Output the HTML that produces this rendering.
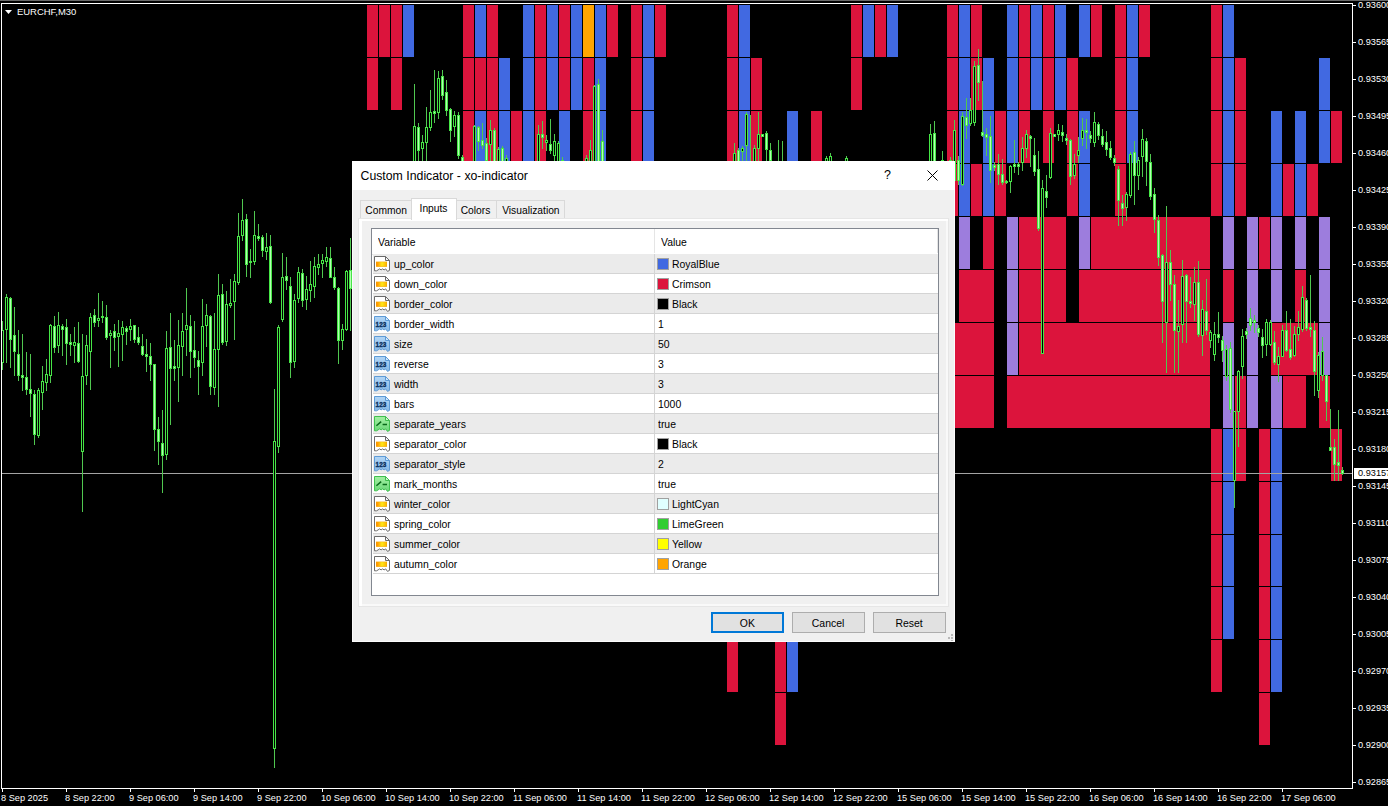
<!DOCTYPE html><html><head><meta charset="utf-8"><style>
html,body{margin:0;padding:0}
body{width:1388px;height:806px;overflow:hidden;position:relative;background:#000;font-family:"Liberation Sans",sans-serif}
.t{position:absolute;color:#fff;font-size:9.2px;line-height:10px;white-space:nowrap}
.pl{position:absolute;left:1358px;color:#fff;font-size:9.2px;line-height:10px;white-space:nowrap}
#dlg{position:absolute;left:352px;top:161px;width:603px;height:481px;background:#f0f0f0;box-shadow:inset 1px 0 0 #fcfcfc,inset -1px 0 0 #fcfcfc,inset 0 -1px 0 #fcfcfc}
#dlg .title{position:absolute;left:0;top:0;width:603px;height:29px;background:#fff}
#dlg .ttxt{position:absolute;left:8.5px;top:8px;font-size:12.3px;line-height:14px;color:#000;white-space:nowrap}
.sx{display:inline-block;transform:scaleX(.915);transform-origin:0 50%;white-space:nowrap}
.sc{display:inline-block;transform:scaleX(.9);transform-origin:50% 50%;white-space:nowrap}
.tab{position:absolute;font-size:11.4px;line-height:12px;color:#000;white-space:nowrap;box-sizing:border-box;border:1px solid #d9d9d9;background:#f0f0f0;text-align:center}
#pane{position:absolute;left:6px;top:57px;width:591px;height:389px;background:#f0f0f0;border:1px solid #e6e6e6;box-sizing:border-box;box-shadow:inset 3px 2px 0 #fff,inset -2px -2px 0 #f9f9f9}
#list{position:absolute;left:19px;top:67px;width:568px;height:368px;background:#fff;border:1px solid #828790;box-sizing:border-box}
.row{position:absolute;left:1px;width:565px;height:19px;border-bottom:1px solid #d4d4d4;font-size:11.4px;line-height:21px;color:#000;white-space:nowrap}
.row.g{background:#ebebeb}
.row .n{position:absolute;left:20.75px;top:0}
.row .v{position:absolute;left:285px;top:0}
.row .vs{position:absolute;left:299px;top:0}
.row .sw{position:absolute;left:284px;top:4px;width:10px;height:10px;border:1px solid #a0a0a0}
.row .sep{position:absolute;left:281px;top:0;width:1px;height:19px;background:#d4d4d4}
.row svg{position:absolute;left:1px;top:2px}
.btn{position:absolute;top:451px;width:73px;height:21px;box-sizing:border-box;border:1px solid #adadad;background:#e1e1e1;font-size:11.6px;line-height:19px;text-align:center;color:#000}
</style></head><body>
<svg width="1388" height="806" shape-rendering="crispEdges" style="position:absolute;left:0;top:0">
<rect x="367" y="5" width="11" height="52" fill="#DC143C"/>
<rect x="379" y="5" width="11" height="52" fill="#DC143C"/>
<rect x="391" y="5" width="11" height="52" fill="#DC143C"/>
<rect x="403" y="5" width="11" height="52" fill="#4169E1"/>
<rect x="463" y="5" width="11" height="52" fill="#DC143C"/>
<rect x="475" y="5" width="11" height="52" fill="#4169E1"/>
<rect x="487" y="5" width="11" height="52" fill="#DC143C"/>
<rect x="523" y="5" width="11" height="52" fill="#4169E1"/>
<rect x="535" y="5" width="11" height="52" fill="#DC143C"/>
<rect x="547" y="5" width="11" height="52" fill="#4169E1"/>
<rect x="559" y="5" width="11" height="52" fill="#DC143C"/>
<rect x="571" y="5" width="11" height="52" fill="#4169E1"/>
<rect x="583" y="5" width="11" height="52" fill="#FFA500"/>
<rect x="595" y="5" width="11" height="52" fill="#4169E1"/>
<rect x="607" y="5" width="11" height="52" fill="#DC143C"/>
<rect x="631" y="5" width="11" height="52" fill="#DC143C"/>
<rect x="643" y="5" width="11" height="52" fill="#4169E1"/>
<rect x="655" y="5" width="11" height="52" fill="#DC143C"/>
<rect x="727" y="5" width="11" height="52" fill="#DC143C"/>
<rect x="739" y="5" width="11" height="52" fill="#4169E1"/>
<rect x="851" y="5" width="11" height="52" fill="#DC143C"/>
<rect x="863" y="5" width="11" height="52" fill="#4169E1"/>
<rect x="875" y="5" width="11" height="52" fill="#DC143C"/>
<rect x="887" y="5" width="11" height="52" fill="#4169E1"/>
<rect x="947" y="5" width="11" height="52" fill="#DC143C"/>
<rect x="959" y="5" width="11" height="52" fill="#4169E1"/>
<rect x="971" y="5" width="11" height="52" fill="#DC143C"/>
<rect x="1007" y="5" width="11" height="52" fill="#4169E1"/>
<rect x="1019" y="5" width="11" height="52" fill="#DC143C"/>
<rect x="1031" y="5" width="11" height="52" fill="#4169E1"/>
<rect x="1043" y="5" width="11" height="52" fill="#DC143C"/>
<rect x="1055" y="5" width="11" height="52" fill="#4169E1"/>
<rect x="1079" y="5" width="11" height="52" fill="#4169E1"/>
<rect x="1091" y="5" width="11" height="52" fill="#DC143C"/>
<rect x="1115" y="5" width="11" height="52" fill="#DC143C"/>
<rect x="1127" y="5" width="11" height="52" fill="#4169E1"/>
<rect x="1139" y="5" width="11" height="52" fill="#DC143C"/>
<rect x="1211" y="5" width="11" height="52" fill="#DC143C"/>
<rect x="1223" y="5" width="11" height="52" fill="#4169E1"/>
<rect x="367" y="58" width="11" height="52" fill="#DC143C"/>
<rect x="391" y="58" width="11" height="52" fill="#DC143C"/>
<rect x="463" y="58" width="11" height="52" fill="#DC143C"/>
<rect x="475" y="58" width="11" height="52" fill="#DC143C"/>
<rect x="487" y="58" width="11" height="52" fill="#DC143C"/>
<rect x="499" y="58" width="11" height="52" fill="#4169E1"/>
<rect x="523" y="58" width="11" height="52" fill="#4169E1"/>
<rect x="535" y="58" width="11" height="52" fill="#DC143C"/>
<rect x="547" y="58" width="11" height="52" fill="#4169E1"/>
<rect x="559" y="58" width="11" height="52" fill="#DC143C"/>
<rect x="571" y="58" width="11" height="52" fill="#4169E1"/>
<rect x="583" y="58" width="11" height="52" fill="#DC143C"/>
<rect x="595" y="58" width="11" height="52" fill="#4169E1"/>
<rect x="631" y="58" width="11" height="52" fill="#DC143C"/>
<rect x="643" y="58" width="11" height="52" fill="#4169E1"/>
<rect x="727" y="58" width="11" height="52" fill="#DC143C"/>
<rect x="739" y="58" width="11" height="52" fill="#4169E1"/>
<rect x="751" y="58" width="11" height="52" fill="#DC143C"/>
<rect x="851" y="58" width="11" height="52" fill="#DC143C"/>
<rect x="947" y="58" width="11" height="52" fill="#DC143C"/>
<rect x="959" y="58" width="11" height="52" fill="#4169E1"/>
<rect x="971" y="58" width="11" height="52" fill="#DC143C"/>
<rect x="983" y="58" width="11" height="52" fill="#4169E1"/>
<rect x="1007" y="58" width="11" height="52" fill="#4169E1"/>
<rect x="1019" y="58" width="11" height="52" fill="#DC143C"/>
<rect x="1031" y="58" width="11" height="52" fill="#4169E1"/>
<rect x="1043" y="58" width="11" height="52" fill="#DC143C"/>
<rect x="1055" y="58" width="11" height="52" fill="#4169E1"/>
<rect x="1067" y="58" width="11" height="52" fill="#DC143C"/>
<rect x="1115" y="58" width="11" height="52" fill="#DC143C"/>
<rect x="1127" y="58" width="11" height="52" fill="#4169E1"/>
<rect x="1211" y="58" width="11" height="52" fill="#DC143C"/>
<rect x="1223" y="58" width="11" height="52" fill="#4169E1"/>
<rect x="1235" y="58" width="11" height="52" fill="#DC143C"/>
<rect x="1319" y="58" width="11" height="52" fill="#4169E1"/>
<rect x="463" y="111" width="11" height="52" fill="#DC143C"/>
<rect x="475" y="111" width="11" height="52" fill="#4169E1"/>
<rect x="487" y="111" width="11" height="52" fill="#DC143C"/>
<rect x="499" y="111" width="11" height="52" fill="#4169E1"/>
<rect x="511" y="111" width="11" height="52" fill="#DC143C"/>
<rect x="523" y="111" width="11" height="52" fill="#4169E1"/>
<rect x="535" y="111" width="11" height="52" fill="#DC143C"/>
<rect x="559" y="111" width="11" height="52" fill="#4169E1"/>
<rect x="583" y="111" width="11" height="52" fill="#DC143C"/>
<rect x="595" y="111" width="11" height="52" fill="#4169E1"/>
<rect x="631" y="111" width="11" height="52" fill="#DC143C"/>
<rect x="643" y="111" width="11" height="52" fill="#4169E1"/>
<rect x="727" y="111" width="11" height="52" fill="#DC143C"/>
<rect x="739" y="111" width="11" height="52" fill="#4169E1"/>
<rect x="751" y="111" width="11" height="52" fill="#DC143C"/>
<rect x="787" y="111" width="11" height="52" fill="#4169E1"/>
<rect x="811" y="111" width="11" height="52" fill="#DC143C"/>
<rect x="947" y="111" width="11" height="52" fill="#DC143C"/>
<rect x="959" y="111" width="11" height="52" fill="#4169E1"/>
<rect x="983" y="111" width="11" height="52" fill="#4169E1"/>
<rect x="995" y="111" width="11" height="52" fill="#DC143C"/>
<rect x="1007" y="111" width="11" height="52" fill="#4169E1"/>
<rect x="1019" y="111" width="11" height="52" fill="#DC143C"/>
<rect x="1043" y="111" width="11" height="52" fill="#DC143C"/>
<rect x="1067" y="111" width="11" height="52" fill="#DC143C"/>
<rect x="1079" y="111" width="11" height="52" fill="#4169E1"/>
<rect x="1115" y="111" width="11" height="52" fill="#DC143C"/>
<rect x="1127" y="111" width="11" height="52" fill="#4169E1"/>
<rect x="1211" y="111" width="11" height="52" fill="#DC143C"/>
<rect x="1223" y="111" width="11" height="52" fill="#4169E1"/>
<rect x="1235" y="111" width="11" height="52" fill="#DC143C"/>
<rect x="1271" y="111" width="11" height="52" fill="#4169E1"/>
<rect x="1295" y="111" width="11" height="52" fill="#4169E1"/>
<rect x="1319" y="111" width="11" height="52" fill="#4169E1"/>
<rect x="1331" y="111" width="11" height="52" fill="#DC143C"/>
<rect x="947" y="164" width="11" height="52" fill="#DC143C"/>
<rect x="959" y="164" width="11" height="52" fill="#4169E1"/>
<rect x="971" y="164" width="11" height="52" fill="#DC143C"/>
<rect x="983" y="164" width="11" height="52" fill="#4169E1"/>
<rect x="995" y="164" width="11" height="52" fill="#DC143C"/>
<rect x="1067" y="164" width="11" height="52" fill="#DC143C"/>
<rect x="1079" y="164" width="11" height="52" fill="#4169E1"/>
<rect x="1115" y="164" width="11" height="52" fill="#DC143C"/>
<rect x="1211" y="164" width="11" height="52" fill="#DC143C"/>
<rect x="1223" y="164" width="11" height="52" fill="#4169E1"/>
<rect x="1235" y="164" width="11" height="52" fill="#DC143C"/>
<rect x="1271" y="164" width="11" height="52" fill="#4169E1"/>
<rect x="1283" y="164" width="11" height="52" fill="#DC143C"/>
<rect x="1295" y="164" width="11" height="52" fill="#4169E1"/>
<rect x="1307" y="164" width="11" height="52" fill="#DC143C"/>
<rect x="959" y="217" width="11" height="52" fill="#9D7DDD"/>
<rect x="983" y="217" width="11" height="52" fill="#DC143C"/>
<rect x="1007" y="217" width="11" height="52" fill="#9D7DDD"/>
<rect x="1019" y="217" width="47" height="52" fill="#DC143C"/>
<rect x="1079" y="217" width="11" height="52" fill="#9D7DDD"/>
<rect x="1091" y="217" width="119" height="52" fill="#DC143C"/>
<rect x="1223" y="217" width="11" height="52" fill="#9D7DDD"/>
<rect x="1247" y="217" width="11" height="52" fill="#9D7DDD"/>
<rect x="1259" y="217" width="11" height="52" fill="#DC143C"/>
<rect x="1271" y="217" width="11" height="52" fill="#9D7DDD"/>
<rect x="1295" y="217" width="11" height="52" fill="#9D7DDD"/>
<rect x="1319" y="217" width="11" height="52" fill="#9D7DDD"/>
<rect x="959" y="270" width="35" height="52" fill="#DC143C"/>
<rect x="1007" y="270" width="11" height="52" fill="#9D7DDD"/>
<rect x="1019" y="270" width="47" height="52" fill="#DC143C"/>
<rect x="1079" y="270" width="131" height="52" fill="#DC143C"/>
<rect x="1223" y="270" width="11" height="52" fill="#DC143C"/>
<rect x="1247" y="270" width="11" height="52" fill="#9D7DDD"/>
<rect x="1271" y="270" width="11" height="52" fill="#9D7DDD"/>
<rect x="1295" y="270" width="11" height="52" fill="#DC143C"/>
<rect x="1319" y="270" width="11" height="52" fill="#9D7DDD"/>
<rect x="947" y="323" width="47" height="52" fill="#DC143C"/>
<rect x="1007" y="323" width="11" height="52" fill="#9D7DDD"/>
<rect x="1019" y="323" width="191" height="52" fill="#DC143C"/>
<rect x="1223" y="323" width="11" height="52" fill="#9D7DDD"/>
<rect x="1247" y="323" width="11" height="52" fill="#9D7DDD"/>
<rect x="1271" y="323" width="47" height="52" fill="#DC143C"/>
<rect x="1319" y="323" width="11" height="52" fill="#9D7DDD"/>
<rect x="947" y="376" width="47" height="52" fill="#DC143C"/>
<rect x="1007" y="376" width="203" height="52" fill="#DC143C"/>
<rect x="1223" y="376" width="11" height="52" fill="#9D7DDD"/>
<rect x="1235" y="376" width="11" height="52" fill="#DC143C"/>
<rect x="1247" y="376" width="11" height="52" fill="#9D7DDD"/>
<rect x="1271" y="376" width="11" height="52" fill="#9D7DDD"/>
<rect x="1283" y="376" width="23" height="52" fill="#DC143C"/>
<rect x="1319" y="376" width="11" height="52" fill="#DC143C"/>
<rect x="1211" y="429" width="11" height="52" fill="#DC143C"/>
<rect x="1223" y="429" width="11" height="52" fill="#4169E1"/>
<rect x="1235" y="429" width="11" height="52" fill="#DC143C"/>
<rect x="1259" y="429" width="11" height="52" fill="#DC143C"/>
<rect x="1271" y="429" width="11" height="52" fill="#4169E1"/>
<rect x="1331" y="429" width="11" height="52" fill="#DC143C"/>
<rect x="1211" y="482" width="11" height="52" fill="#DC143C"/>
<rect x="1223" y="482" width="11" height="52" fill="#4169E1"/>
<rect x="1259" y="482" width="11" height="52" fill="#DC143C"/>
<rect x="1271" y="482" width="11" height="52" fill="#4169E1"/>
<rect x="1211" y="535" width="11" height="51" fill="#DC143C"/>
<rect x="1223" y="535" width="11" height="51" fill="#4169E1"/>
<rect x="1259" y="535" width="11" height="51" fill="#DC143C"/>
<rect x="1271" y="535" width="11" height="51" fill="#4169E1"/>
<rect x="1211" y="587" width="11" height="52" fill="#DC143C"/>
<rect x="1223" y="587" width="11" height="52" fill="#4169E1"/>
<rect x="1259" y="587" width="11" height="52" fill="#DC143C"/>
<rect x="1271" y="587" width="11" height="52" fill="#4169E1"/>
<rect x="727" y="640" width="11" height="52" fill="#DC143C"/>
<rect x="775" y="640" width="11" height="52" fill="#DC143C"/>
<rect x="787" y="640" width="11" height="52" fill="#4169E1"/>
<rect x="1211" y="640" width="11" height="52" fill="#DC143C"/>
<rect x="1259" y="640" width="11" height="52" fill="#DC143C"/>
<rect x="1271" y="640" width="11" height="52" fill="#4169E1"/>
<rect x="775" y="693" width="11" height="52" fill="#DC143C"/>
<rect x="1259" y="693" width="11" height="52" fill="#DC143C"/>
<rect x="2" y="473" width="1350" height="1" fill="#a4a4a4"/>
<rect x="2" y="321" width="1" height="49" fill="#50c850"/>
<rect x="1" y="330" width="3" height="33" fill="#46e646"/>
<rect x="2" y="331" width="1" height="31" fill="#000"/>
<rect x="6" y="294" width="1" height="69" fill="#50c850"/>
<rect x="5" y="297" width="3" height="33" fill="#46e646"/>
<rect x="6" y="298" width="1" height="31" fill="#000"/>
<rect x="10" y="297" width="1" height="71" fill="#50c850"/>
<rect x="9" y="298" width="3" height="42" fill="#46e646"/>
<rect x="10" y="299" width="1" height="40" fill="#b4ffb4"/>
<rect x="14" y="307" width="1" height="69" fill="#50c850"/>
<rect x="13" y="335" width="3" height="17" fill="#46e646"/>
<rect x="14" y="336" width="1" height="15" fill="#b4ffb4"/>
<rect x="18" y="330" width="1" height="51" fill="#50c850"/>
<rect x="17" y="354" width="3" height="22" fill="#46e646"/>
<rect x="18" y="355" width="1" height="20" fill="#b4ffb4"/>
<rect x="22" y="334" width="1" height="57" fill="#50c850"/>
<rect x="21" y="375" width="3" height="3" fill="#46e646"/>
<rect x="22" y="376" width="1" height="1" fill="#b4ffb4"/>
<rect x="26" y="352" width="1" height="43" fill="#50c850"/>
<rect x="25" y="377" width="3" height="13" fill="#46e646"/>
<rect x="26" y="378" width="1" height="11" fill="#b4ffb4"/>
<rect x="30" y="354" width="1" height="63" fill="#50c850"/>
<rect x="29" y="389" width="3" height="5" fill="#46e646"/>
<rect x="30" y="390" width="1" height="3" fill="#b4ffb4"/>
<rect x="34" y="390" width="1" height="55" fill="#50c850"/>
<rect x="33" y="394" width="3" height="41" fill="#46e646"/>
<rect x="34" y="395" width="1" height="39" fill="#b4ffb4"/>
<rect x="38" y="388" width="1" height="50" fill="#50c850"/>
<rect x="37" y="390" width="3" height="46" fill="#46e646"/>
<rect x="38" y="391" width="1" height="44" fill="#000"/>
<rect x="42" y="366" width="1" height="44" fill="#50c850"/>
<rect x="41" y="381" width="3" height="12" fill="#46e646"/>
<rect x="42" y="382" width="1" height="10" fill="#000"/>
<rect x="46" y="359" width="1" height="32" fill="#50c850"/>
<rect x="45" y="374" width="3" height="9" fill="#46e646"/>
<rect x="46" y="375" width="1" height="7" fill="#000"/>
<rect x="50" y="324" width="1" height="59" fill="#50c850"/>
<rect x="49" y="325" width="3" height="51" fill="#46e646"/>
<rect x="50" y="326" width="1" height="49" fill="#000"/>
<rect x="54" y="316" width="1" height="37" fill="#50c850"/>
<rect x="53" y="326" width="3" height="22" fill="#46e646"/>
<rect x="54" y="327" width="1" height="20" fill="#b4ffb4"/>
<rect x="58" y="312" width="1" height="41" fill="#50c850"/>
<rect x="57" y="325" width="3" height="21" fill="#46e646"/>
<rect x="58" y="326" width="1" height="19" fill="#000"/>
<rect x="62" y="324" width="1" height="32" fill="#50c850"/>
<rect x="61" y="326" width="3" height="4" fill="#46e646"/>
<rect x="62" y="327" width="1" height="2" fill="#b4ffb4"/>
<rect x="66" y="319" width="1" height="46" fill="#50c850"/>
<rect x="65" y="327" width="3" height="17" fill="#46e646"/>
<rect x="66" y="328" width="1" height="15" fill="#b4ffb4"/>
<rect x="70" y="334" width="1" height="22" fill="#50c850"/>
<rect x="69" y="342" width="3" height="3" fill="#46e646"/>
<rect x="70" y="343" width="1" height="1" fill="#b4ffb4"/>
<rect x="74" y="327" width="1" height="36" fill="#50c850"/>
<rect x="73" y="342" width="3" height="4" fill="#46e646"/>
<rect x="74" y="343" width="1" height="2" fill="#000"/>
<rect x="78" y="322" width="1" height="41" fill="#50c850"/>
<rect x="77" y="343" width="3" height="19" fill="#46e646"/>
<rect x="78" y="344" width="1" height="17" fill="#b4ffb4"/>
<rect x="82" y="334" width="1" height="178" fill="#50c850"/>
<rect x="81" y="376" width="3" height="76" fill="#46e646"/>
<rect x="82" y="377" width="1" height="74" fill="#000"/>
<rect x="86" y="335" width="1" height="50" fill="#50c850"/>
<rect x="85" y="345" width="3" height="31" fill="#46e646"/>
<rect x="86" y="346" width="1" height="29" fill="#000"/>
<rect x="90" y="313" width="1" height="77" fill="#50c850"/>
<rect x="89" y="317" width="3" height="35" fill="#46e646"/>
<rect x="90" y="318" width="1" height="33" fill="#000"/>
<rect x="94" y="309" width="1" height="18" fill="#50c850"/>
<rect x="93" y="315" width="3" height="8" fill="#46e646"/>
<rect x="94" y="316" width="1" height="6" fill="#b4ffb4"/>
<rect x="98" y="293" width="1" height="34" fill="#50c850"/>
<rect x="97" y="318" width="3" height="3" fill="#46e646"/>
<rect x="98" y="319" width="1" height="1" fill="#000"/>
<rect x="102" y="301" width="1" height="22" fill="#50c850"/>
<rect x="101" y="316" width="3" height="2" fill="#46e646"/>
<rect x="106" y="305" width="1" height="35" fill="#50c850"/>
<rect x="105" y="317" width="3" height="21" fill="#46e646"/>
<rect x="106" y="318" width="1" height="19" fill="#b4ffb4"/>
<rect x="110" y="330" width="1" height="38" fill="#50c850"/>
<rect x="109" y="333" width="3" height="3" fill="#46e646"/>
<rect x="110" y="334" width="1" height="1" fill="#000"/>
<rect x="114" y="324" width="1" height="27" fill="#50c850"/>
<rect x="113" y="331" width="3" height="7" fill="#46e646"/>
<rect x="114" y="332" width="1" height="5" fill="#b4ffb4"/>
<rect x="118" y="320" width="1" height="47" fill="#50c850"/>
<rect x="117" y="333" width="3" height="4" fill="#46e646"/>
<rect x="118" y="334" width="1" height="2" fill="#000"/>
<rect x="122" y="321" width="1" height="40" fill="#50c850"/>
<rect x="121" y="327" width="3" height="8" fill="#46e646"/>
<rect x="122" y="328" width="1" height="6" fill="#000"/>
<rect x="126" y="326" width="1" height="19" fill="#50c850"/>
<rect x="125" y="328" width="3" height="4" fill="#46e646"/>
<rect x="126" y="329" width="1" height="2" fill="#b4ffb4"/>
<rect x="130" y="319" width="1" height="22" fill="#50c850"/>
<rect x="129" y="326" width="3" height="4" fill="#46e646"/>
<rect x="130" y="327" width="1" height="2" fill="#000"/>
<rect x="134" y="325" width="1" height="18" fill="#50c850"/>
<rect x="133" y="325" width="3" height="15" fill="#46e646"/>
<rect x="134" y="326" width="1" height="13" fill="#b4ffb4"/>
<rect x="138" y="327" width="1" height="18" fill="#50c850"/>
<rect x="137" y="337" width="3" height="6" fill="#46e646"/>
<rect x="138" y="338" width="1" height="4" fill="#b4ffb4"/>
<rect x="142" y="334" width="1" height="22" fill="#50c850"/>
<rect x="141" y="346" width="3" height="9" fill="#46e646"/>
<rect x="142" y="347" width="1" height="7" fill="#b4ffb4"/>
<rect x="146" y="339" width="1" height="33" fill="#50c850"/>
<rect x="145" y="354" width="3" height="3" fill="#46e646"/>
<rect x="146" y="355" width="1" height="1" fill="#b4ffb4"/>
<rect x="150" y="343" width="1" height="38" fill="#50c850"/>
<rect x="149" y="356" width="3" height="9" fill="#46e646"/>
<rect x="150" y="357" width="1" height="7" fill="#b4ffb4"/>
<rect x="154" y="364" width="1" height="87" fill="#50c850"/>
<rect x="153" y="364" width="3" height="66" fill="#46e646"/>
<rect x="154" y="365" width="1" height="64" fill="#b4ffb4"/>
<rect x="158" y="417" width="1" height="48" fill="#50c850"/>
<rect x="157" y="429" width="3" height="13" fill="#46e646"/>
<rect x="158" y="430" width="1" height="11" fill="#b4ffb4"/>
<rect x="162" y="410" width="1" height="83" fill="#50c850"/>
<rect x="161" y="443" width="3" height="13" fill="#46e646"/>
<rect x="162" y="444" width="1" height="11" fill="#b4ffb4"/>
<rect x="166" y="331" width="1" height="129" fill="#50c850"/>
<rect x="165" y="348" width="3" height="107" fill="#46e646"/>
<rect x="166" y="349" width="1" height="105" fill="#000"/>
<rect x="170" y="313" width="1" height="112" fill="#50c850"/>
<rect x="169" y="347" width="3" height="22" fill="#46e646"/>
<rect x="170" y="348" width="1" height="20" fill="#b4ffb4"/>
<rect x="174" y="340" width="1" height="41" fill="#50c850"/>
<rect x="173" y="366" width="3" height="3" fill="#46e646"/>
<rect x="174" y="367" width="1" height="1" fill="#b4ffb4"/>
<rect x="178" y="320" width="1" height="82" fill="#50c850"/>
<rect x="177" y="345" width="3" height="23" fill="#46e646"/>
<rect x="178" y="346" width="1" height="21" fill="#000"/>
<rect x="182" y="313" width="1" height="63" fill="#50c850"/>
<rect x="181" y="331" width="3" height="16" fill="#46e646"/>
<rect x="182" y="332" width="1" height="14" fill="#000"/>
<rect x="186" y="288" width="1" height="68" fill="#50c850"/>
<rect x="185" y="325" width="3" height="5" fill="#46e646"/>
<rect x="186" y="326" width="1" height="3" fill="#000"/>
<rect x="190" y="315" width="1" height="63" fill="#50c850"/>
<rect x="189" y="326" width="3" height="26" fill="#46e646"/>
<rect x="190" y="327" width="1" height="24" fill="#b4ffb4"/>
<rect x="194" y="321" width="1" height="47" fill="#50c850"/>
<rect x="193" y="350" width="3" height="8" fill="#46e646"/>
<rect x="194" y="351" width="1" height="6" fill="#b4ffb4"/>
<rect x="198" y="351" width="1" height="44" fill="#50c850"/>
<rect x="197" y="360" width="3" height="7" fill="#46e646"/>
<rect x="198" y="361" width="1" height="5" fill="#b4ffb4"/>
<rect x="202" y="299" width="1" height="77" fill="#50c850"/>
<rect x="201" y="326" width="3" height="37" fill="#46e646"/>
<rect x="202" y="327" width="1" height="35" fill="#000"/>
<rect x="206" y="304" width="1" height="43" fill="#50c850"/>
<rect x="205" y="315" width="3" height="11" fill="#46e646"/>
<rect x="206" y="316" width="1" height="9" fill="#000"/>
<rect x="210" y="315" width="1" height="80" fill="#50c850"/>
<rect x="209" y="316" width="3" height="71" fill="#46e646"/>
<rect x="210" y="317" width="1" height="69" fill="#b4ffb4"/>
<rect x="214" y="313" width="1" height="82" fill="#50c850"/>
<rect x="213" y="349" width="3" height="39" fill="#46e646"/>
<rect x="214" y="350" width="1" height="37" fill="#000"/>
<rect x="218" y="274" width="1" height="133" fill="#50c850"/>
<rect x="217" y="295" width="3" height="55" fill="#46e646"/>
<rect x="218" y="296" width="1" height="53" fill="#000"/>
<rect x="222" y="284" width="1" height="61" fill="#50c850"/>
<rect x="221" y="294" width="3" height="49" fill="#46e646"/>
<rect x="222" y="295" width="1" height="47" fill="#b4ffb4"/>
<rect x="226" y="291" width="1" height="55" fill="#50c850"/>
<rect x="225" y="304" width="3" height="38" fill="#46e646"/>
<rect x="226" y="305" width="1" height="36" fill="#000"/>
<rect x="230" y="279" width="1" height="29" fill="#50c850"/>
<rect x="229" y="303" width="3" height="3" fill="#46e646"/>
<rect x="230" y="304" width="1" height="1" fill="#000"/>
<rect x="234" y="274" width="1" height="66" fill="#50c850"/>
<rect x="233" y="281" width="3" height="21" fill="#46e646"/>
<rect x="234" y="282" width="1" height="19" fill="#000"/>
<rect x="238" y="213" width="1" height="72" fill="#50c850"/>
<rect x="237" y="236" width="3" height="47" fill="#46e646"/>
<rect x="238" y="237" width="1" height="45" fill="#000"/>
<rect x="242" y="199" width="1" height="42" fill="#50c850"/>
<rect x="241" y="220" width="3" height="16" fill="#46e646"/>
<rect x="242" y="221" width="1" height="14" fill="#000"/>
<rect x="246" y="214" width="1" height="63" fill="#50c850"/>
<rect x="245" y="219" width="3" height="46" fill="#46e646"/>
<rect x="246" y="220" width="1" height="44" fill="#b4ffb4"/>
<rect x="250" y="249" width="1" height="29" fill="#50c850"/>
<rect x="249" y="261" width="3" height="2" fill="#46e646"/>
<rect x="254" y="211" width="1" height="54" fill="#50c850"/>
<rect x="253" y="235" width="3" height="27" fill="#46e646"/>
<rect x="254" y="236" width="1" height="25" fill="#000"/>
<rect x="258" y="224" width="1" height="17" fill="#50c850"/>
<rect x="257" y="236" width="3" height="3" fill="#46e646"/>
<rect x="258" y="237" width="1" height="1" fill="#b4ffb4"/>
<rect x="262" y="235" width="1" height="22" fill="#50c850"/>
<rect x="261" y="237" width="3" height="14" fill="#46e646"/>
<rect x="262" y="238" width="1" height="12" fill="#b4ffb4"/>
<rect x="266" y="233" width="1" height="27" fill="#50c850"/>
<rect x="265" y="247" width="3" height="5" fill="#46e646"/>
<rect x="266" y="248" width="1" height="3" fill="#000"/>
<rect x="270" y="235" width="1" height="69" fill="#50c850"/>
<rect x="269" y="246" width="3" height="57" fill="#46e646"/>
<rect x="270" y="247" width="1" height="55" fill="#b4ffb4"/>
<rect x="274" y="389" width="1" height="379" fill="#50c850"/>
<rect x="273" y="441" width="3" height="308" fill="#46e646"/>
<rect x="274" y="442" width="1" height="306" fill="#000"/>
<rect x="278" y="325" width="1" height="128" fill="#50c850"/>
<rect x="277" y="327" width="3" height="120" fill="#46e646"/>
<rect x="278" y="328" width="1" height="118" fill="#000"/>
<rect x="282" y="253" width="1" height="69" fill="#50c850"/>
<rect x="281" y="277" width="3" height="43" fill="#46e646"/>
<rect x="282" y="278" width="1" height="41" fill="#000"/>
<rect x="286" y="257" width="1" height="33" fill="#50c850"/>
<rect x="285" y="276" width="3" height="5" fill="#46e646"/>
<rect x="286" y="277" width="1" height="3" fill="#b4ffb4"/>
<rect x="290" y="277" width="1" height="101" fill="#50c850"/>
<rect x="289" y="286" width="3" height="77" fill="#46e646"/>
<rect x="290" y="287" width="1" height="75" fill="#b4ffb4"/>
<rect x="294" y="294" width="1" height="74" fill="#50c850"/>
<rect x="293" y="300" width="3" height="62" fill="#46e646"/>
<rect x="294" y="301" width="1" height="60" fill="#000"/>
<rect x="298" y="267" width="1" height="36" fill="#50c850"/>
<rect x="297" y="272" width="3" height="27" fill="#46e646"/>
<rect x="298" y="273" width="1" height="25" fill="#000"/>
<rect x="302" y="269" width="1" height="38" fill="#50c850"/>
<rect x="301" y="273" width="3" height="28" fill="#46e646"/>
<rect x="302" y="274" width="1" height="26" fill="#b4ffb4"/>
<rect x="306" y="276" width="1" height="34" fill="#50c850"/>
<rect x="305" y="289" width="3" height="11" fill="#46e646"/>
<rect x="306" y="290" width="1" height="9" fill="#000"/>
<rect x="310" y="261" width="1" height="41" fill="#50c850"/>
<rect x="309" y="284" width="3" height="7" fill="#46e646"/>
<rect x="310" y="285" width="1" height="5" fill="#000"/>
<rect x="314" y="257" width="1" height="41" fill="#50c850"/>
<rect x="313" y="266" width="3" height="21" fill="#46e646"/>
<rect x="314" y="267" width="1" height="19" fill="#000"/>
<rect x="318" y="254" width="1" height="21" fill="#50c850"/>
<rect x="317" y="264" width="3" height="4" fill="#46e646"/>
<rect x="318" y="265" width="1" height="2" fill="#000"/>
<rect x="322" y="254" width="1" height="24" fill="#50c850"/>
<rect x="321" y="260" width="3" height="4" fill="#46e646"/>
<rect x="322" y="261" width="1" height="2" fill="#000"/>
<rect x="326" y="247" width="1" height="20" fill="#50c850"/>
<rect x="325" y="257" width="3" height="5" fill="#46e646"/>
<rect x="326" y="258" width="1" height="3" fill="#000"/>
<rect x="330" y="247" width="1" height="31" fill="#50c850"/>
<rect x="329" y="258" width="3" height="20" fill="#46e646"/>
<rect x="330" y="259" width="1" height="18" fill="#b4ffb4"/>
<rect x="334" y="267" width="1" height="23" fill="#50c850"/>
<rect x="333" y="277" width="3" height="11" fill="#46e646"/>
<rect x="334" y="278" width="1" height="9" fill="#b4ffb4"/>
<rect x="338" y="287" width="1" height="77" fill="#50c850"/>
<rect x="337" y="288" width="3" height="53" fill="#46e646"/>
<rect x="338" y="289" width="1" height="51" fill="#b4ffb4"/>
<rect x="342" y="324" width="1" height="26" fill="#50c850"/>
<rect x="341" y="329" width="3" height="12" fill="#46e646"/>
<rect x="342" y="330" width="1" height="10" fill="#000"/>
<rect x="346" y="270" width="1" height="61" fill="#50c850"/>
<rect x="345" y="271" width="3" height="59" fill="#46e646"/>
<rect x="346" y="272" width="1" height="57" fill="#000"/>
<rect x="350" y="238" width="1" height="93" fill="#50c850"/>
<rect x="349" y="270" width="3" height="19" fill="#46e646"/>
<rect x="350" y="271" width="1" height="17" fill="#b4ffb4"/>
<rect x="414" y="84" width="1" height="117" fill="#50c850"/>
<rect x="413" y="126" width="3" height="65" fill="#46e646"/>
<rect x="414" y="127" width="1" height="63" fill="#000"/>
<rect x="418" y="123" width="1" height="78" fill="#50c850"/>
<rect x="417" y="127" width="3" height="24" fill="#46e646"/>
<rect x="418" y="128" width="1" height="22" fill="#b4ffb4"/>
<rect x="422" y="135" width="1" height="31" fill="#50c850"/>
<rect x="421" y="142" width="3" height="7" fill="#46e646"/>
<rect x="422" y="143" width="1" height="5" fill="#000"/>
<rect x="426" y="107" width="1" height="59" fill="#50c850"/>
<rect x="425" y="127" width="3" height="16" fill="#46e646"/>
<rect x="426" y="128" width="1" height="14" fill="#000"/>
<rect x="430" y="90" width="1" height="41" fill="#50c850"/>
<rect x="429" y="112" width="3" height="16" fill="#46e646"/>
<rect x="430" y="113" width="1" height="14" fill="#000"/>
<rect x="434" y="70" width="1" height="53" fill="#50c850"/>
<rect x="433" y="111" width="3" height="3" fill="#46e646"/>
<rect x="434" y="112" width="1" height="1" fill="#b4ffb4"/>
<rect x="438" y="71" width="1" height="48" fill="#50c850"/>
<rect x="437" y="78" width="3" height="35" fill="#46e646"/>
<rect x="438" y="79" width="1" height="33" fill="#000"/>
<rect x="442" y="70" width="1" height="30" fill="#50c850"/>
<rect x="441" y="76" width="3" height="20" fill="#46e646"/>
<rect x="442" y="77" width="1" height="18" fill="#b4ffb4"/>
<rect x="446" y="80" width="1" height="36" fill="#50c850"/>
<rect x="445" y="92" width="3" height="19" fill="#46e646"/>
<rect x="446" y="93" width="1" height="17" fill="#b4ffb4"/>
<rect x="450" y="108" width="1" height="34" fill="#50c850"/>
<rect x="449" y="109" width="3" height="22" fill="#46e646"/>
<rect x="450" y="110" width="1" height="20" fill="#b4ffb4"/>
<rect x="454" y="111" width="1" height="26" fill="#50c850"/>
<rect x="453" y="115" width="3" height="12" fill="#46e646"/>
<rect x="454" y="116" width="1" height="10" fill="#000"/>
<rect x="458" y="112" width="1" height="47" fill="#50c850"/>
<rect x="457" y="115" width="3" height="41" fill="#46e646"/>
<rect x="458" y="116" width="1" height="39" fill="#b4ffb4"/>
<rect x="462" y="155" width="1" height="46" fill="#50c850"/>
<rect x="461" y="157" width="3" height="34" fill="#46e646"/>
<rect x="462" y="158" width="1" height="32" fill="#b4ffb4"/>
<rect x="474" y="125" width="1" height="66" fill="#50c850"/>
<rect x="473" y="126" width="3" height="55" fill="#46e646"/>
<rect x="474" y="127" width="1" height="53" fill="#000"/>
<rect x="478" y="126" width="1" height="25" fill="#50c850"/>
<rect x="477" y="127" width="3" height="15" fill="#46e646"/>
<rect x="478" y="128" width="1" height="13" fill="#b4ffb4"/>
<rect x="482" y="123" width="1" height="26" fill="#50c850"/>
<rect x="481" y="140" width="3" height="6" fill="#46e646"/>
<rect x="482" y="141" width="1" height="4" fill="#b4ffb4"/>
<rect x="486" y="138" width="1" height="33" fill="#50c850"/>
<rect x="485" y="143" width="3" height="18" fill="#46e646"/>
<rect x="486" y="144" width="1" height="16" fill="#b4ffb4"/>
<rect x="490" y="120" width="1" height="56" fill="#50c850"/>
<rect x="489" y="130" width="3" height="15" fill="#46e646"/>
<rect x="490" y="131" width="1" height="13" fill="#000"/>
<rect x="494" y="128" width="1" height="63" fill="#50c850"/>
<rect x="493" y="130" width="3" height="41" fill="#46e646"/>
<rect x="494" y="131" width="1" height="39" fill="#b4ffb4"/>
<rect x="498" y="147" width="1" height="44" fill="#50c850"/>
<rect x="497" y="149" width="3" height="27" fill="#46e646"/>
<rect x="498" y="150" width="1" height="25" fill="#000"/>
<rect x="502" y="146" width="1" height="40" fill="#50c850"/>
<rect x="501" y="148" width="3" height="25" fill="#46e646"/>
<rect x="502" y="149" width="1" height="23" fill="#b4ffb4"/>
<rect x="506" y="155" width="1" height="36" fill="#50c850"/>
<rect x="505" y="158" width="3" height="23" fill="#46e646"/>
<rect x="506" y="159" width="1" height="21" fill="#000"/>
<rect x="538" y="125" width="1" height="66" fill="#50c850"/>
<rect x="537" y="134" width="3" height="42" fill="#46e646"/>
<rect x="538" y="135" width="1" height="40" fill="#000"/>
<rect x="542" y="121" width="1" height="28" fill="#50c850"/>
<rect x="541" y="134" width="3" height="4" fill="#46e646"/>
<rect x="542" y="135" width="1" height="2" fill="#b4ffb4"/>
<rect x="546" y="135" width="1" height="16" fill="#50c850"/>
<rect x="545" y="140" width="3" height="3" fill="#46e646"/>
<rect x="546" y="141" width="1" height="1" fill="#000"/>
<rect x="550" y="119" width="1" height="35" fill="#50c850"/>
<rect x="549" y="144" width="3" height="7" fill="#46e646"/>
<rect x="550" y="145" width="1" height="5" fill="#b4ffb4"/>
<rect x="554" y="134" width="1" height="37" fill="#50c850"/>
<rect x="553" y="141" width="3" height="15" fill="#46e646"/>
<rect x="554" y="142" width="1" height="13" fill="#000"/>
<rect x="558" y="141" width="1" height="40" fill="#50c850"/>
<rect x="557" y="143" width="3" height="28" fill="#46e646"/>
<rect x="558" y="144" width="1" height="26" fill="#000"/>
<rect x="562" y="157" width="1" height="34" fill="#50c850"/>
<rect x="561" y="160" width="3" height="21" fill="#46e646"/>
<rect x="562" y="161" width="1" height="19" fill="#b4ffb4"/>
<rect x="586" y="155" width="1" height="36" fill="#50c850"/>
<rect x="585" y="158" width="3" height="23" fill="#46e646"/>
<rect x="586" y="159" width="1" height="21" fill="#000"/>
<rect x="590" y="140" width="1" height="41" fill="#50c850"/>
<rect x="589" y="150" width="3" height="26" fill="#46e646"/>
<rect x="590" y="151" width="1" height="24" fill="#000"/>
<rect x="594" y="85" width="1" height="96" fill="#50c850"/>
<rect x="593" y="86" width="3" height="85" fill="#46e646"/>
<rect x="594" y="87" width="1" height="83" fill="#000"/>
<rect x="598" y="79" width="1" height="112" fill="#50c850"/>
<rect x="597" y="84" width="3" height="92" fill="#46e646"/>
<rect x="598" y="85" width="1" height="90" fill="#b4ffb4"/>
<rect x="602" y="130" width="1" height="61" fill="#50c850"/>
<rect x="601" y="141" width="3" height="40" fill="#46e646"/>
<rect x="602" y="142" width="1" height="38" fill="#b4ffb4"/>
<rect x="734" y="143" width="1" height="28" fill="#50c850"/>
<rect x="733" y="153" width="3" height="13" fill="#46e646"/>
<rect x="734" y="154" width="1" height="11" fill="#000"/>
<rect x="738" y="148" width="1" height="23" fill="#50c850"/>
<rect x="737" y="150" width="3" height="16" fill="#46e646"/>
<rect x="738" y="151" width="1" height="14" fill="#b4ffb4"/>
<rect x="742" y="146" width="1" height="25" fill="#50c850"/>
<rect x="741" y="148" width="3" height="4" fill="#46e646"/>
<rect x="742" y="149" width="1" height="2" fill="#000"/>
<rect x="746" y="112" width="1" height="59" fill="#50c850"/>
<rect x="745" y="114" width="3" height="32" fill="#46e646"/>
<rect x="746" y="115" width="1" height="30" fill="#000"/>
<rect x="750" y="115" width="1" height="56" fill="#50c850"/>
<rect x="749" y="166" width="3" height="5" fill="#46e646"/>
<rect x="750" y="167" width="1" height="3" fill="#000"/>
<rect x="754" y="145" width="1" height="26" fill="#50c850"/>
<rect x="753" y="148" width="3" height="18" fill="#46e646"/>
<rect x="754" y="149" width="1" height="16" fill="#000"/>
<rect x="758" y="112" width="1" height="59" fill="#50c850"/>
<rect x="757" y="134" width="3" height="15" fill="#46e646"/>
<rect x="758" y="135" width="1" height="13" fill="#000"/>
<rect x="762" y="134" width="1" height="3" fill="#50c850"/>
<rect x="761" y="134" width="3" height="3" fill="#46e646"/>
<rect x="762" y="135" width="1" height="1" fill="#b4ffb4"/>
<rect x="766" y="131" width="1" height="35" fill="#50c850"/>
<rect x="765" y="133" width="3" height="17" fill="#46e646"/>
<rect x="766" y="134" width="1" height="15" fill="#b4ffb4"/>
<rect x="770" y="143" width="1" height="23" fill="#50c850"/>
<rect x="769" y="150" width="3" height="11" fill="#46e646"/>
<rect x="770" y="151" width="1" height="9" fill="#b4ffb4"/>
<rect x="778" y="140" width="1" height="26" fill="#50c850"/>
<rect x="777" y="162" width="3" height="4" fill="#46e646"/>
<rect x="778" y="163" width="1" height="2" fill="#000"/>
<rect x="782" y="141" width="1" height="25" fill="#50c850"/>
<rect x="781" y="162" width="3" height="4" fill="#46e646"/>
<rect x="782" y="163" width="1" height="2" fill="#b4ffb4"/>
<rect x="826" y="156" width="1" height="15" fill="#50c850"/>
<rect x="825" y="158" width="3" height="8" fill="#46e646"/>
<rect x="826" y="159" width="1" height="6" fill="#000"/>
<rect x="830" y="153" width="1" height="18" fill="#50c850"/>
<rect x="829" y="156" width="3" height="10" fill="#46e646"/>
<rect x="830" y="157" width="1" height="8" fill="#000"/>
<rect x="846" y="156" width="1" height="15" fill="#50c850"/>
<rect x="845" y="158" width="3" height="8" fill="#46e646"/>
<rect x="846" y="159" width="1" height="6" fill="#000"/>
<rect x="930" y="124" width="1" height="47" fill="#50c850"/>
<rect x="929" y="134" width="3" height="32" fill="#46e646"/>
<rect x="930" y="135" width="1" height="30" fill="#000"/>
<rect x="934" y="121" width="1" height="50" fill="#50c850"/>
<rect x="933" y="133" width="3" height="33" fill="#46e646"/>
<rect x="934" y="134" width="1" height="31" fill="#b4ffb4"/>
<rect x="942" y="151" width="1" height="50" fill="#50c850"/>
<rect x="941" y="160" width="3" height="31" fill="#46e646"/>
<rect x="942" y="161" width="1" height="29" fill="#000"/>
<rect x="950" y="157" width="1" height="44" fill="#50c850"/>
<rect x="949" y="160" width="3" height="31" fill="#46e646"/>
<rect x="950" y="161" width="1" height="29" fill="#000"/>
<rect x="954" y="120" width="1" height="66" fill="#50c850"/>
<rect x="953" y="130" width="3" height="51" fill="#46e646"/>
<rect x="954" y="131" width="1" height="49" fill="#000"/>
<rect x="958" y="156" width="1" height="29" fill="#50c850"/>
<rect x="957" y="160" width="3" height="21" fill="#46e646"/>
<rect x="958" y="161" width="1" height="19" fill="#b4ffb4"/>
<rect x="962" y="112" width="1" height="74" fill="#50c850"/>
<rect x="961" y="116" width="3" height="69" fill="#46e646"/>
<rect x="962" y="117" width="1" height="67" fill="#000"/>
<rect x="966" y="98" width="1" height="41" fill="#50c850"/>
<rect x="965" y="117" width="3" height="9" fill="#46e646"/>
<rect x="966" y="118" width="1" height="7" fill="#b4ffb4"/>
<rect x="970" y="98" width="1" height="28" fill="#50c850"/>
<rect x="969" y="110" width="3" height="14" fill="#46e646"/>
<rect x="970" y="111" width="1" height="12" fill="#000"/>
<rect x="974" y="61" width="1" height="65" fill="#50c850"/>
<rect x="973" y="66" width="3" height="57" fill="#46e646"/>
<rect x="974" y="67" width="1" height="55" fill="#000"/>
<rect x="978" y="49" width="1" height="52" fill="#50c850"/>
<rect x="977" y="65" width="3" height="18" fill="#46e646"/>
<rect x="978" y="66" width="1" height="16" fill="#b4ffb4"/>
<rect x="982" y="81" width="1" height="56" fill="#50c850"/>
<rect x="981" y="132" width="3" height="4" fill="#46e646"/>
<rect x="982" y="133" width="1" height="2" fill="#b4ffb4"/>
<rect x="986" y="128" width="1" height="28" fill="#50c850"/>
<rect x="985" y="134" width="3" height="4" fill="#46e646"/>
<rect x="986" y="135" width="1" height="2" fill="#b4ffb4"/>
<rect x="990" y="116" width="1" height="67" fill="#50c850"/>
<rect x="989" y="136" width="3" height="35" fill="#46e646"/>
<rect x="990" y="137" width="1" height="33" fill="#b4ffb4"/>
<rect x="994" y="162" width="1" height="9" fill="#50c850"/>
<rect x="993" y="165" width="3" height="3" fill="#46e646"/>
<rect x="994" y="166" width="1" height="1" fill="#b4ffb4"/>
<rect x="998" y="154" width="1" height="31" fill="#50c850"/>
<rect x="997" y="164" width="3" height="11" fill="#46e646"/>
<rect x="998" y="165" width="1" height="9" fill="#b4ffb4"/>
<rect x="1002" y="159" width="1" height="26" fill="#50c850"/>
<rect x="1001" y="174" width="3" height="9" fill="#46e646"/>
<rect x="1002" y="175" width="1" height="7" fill="#b4ffb4"/>
<rect x="1006" y="180" width="1" height="4" fill="#50c850"/>
<rect x="1005" y="181" width="3" height="2" fill="#46e646"/>
<rect x="1010" y="165" width="1" height="28" fill="#50c850"/>
<rect x="1009" y="166" width="3" height="16" fill="#46e646"/>
<rect x="1010" y="167" width="1" height="14" fill="#000"/>
<rect x="1014" y="140" width="1" height="33" fill="#50c850"/>
<rect x="1013" y="164" width="3" height="3" fill="#46e646"/>
<rect x="1014" y="165" width="1" height="1" fill="#b4ffb4"/>
<rect x="1018" y="162" width="1" height="13" fill="#50c850"/>
<rect x="1017" y="164" width="3" height="3" fill="#46e646"/>
<rect x="1018" y="165" width="1" height="1" fill="#b4ffb4"/>
<rect x="1022" y="137" width="1" height="34" fill="#50c850"/>
<rect x="1021" y="148" width="3" height="15" fill="#46e646"/>
<rect x="1022" y="149" width="1" height="13" fill="#000"/>
<rect x="1026" y="130" width="1" height="28" fill="#50c850"/>
<rect x="1025" y="134" width="3" height="15" fill="#46e646"/>
<rect x="1026" y="135" width="1" height="13" fill="#000"/>
<rect x="1030" y="135" width="1" height="32" fill="#50c850"/>
<rect x="1029" y="136" width="3" height="3" fill="#46e646"/>
<rect x="1030" y="137" width="1" height="1" fill="#b4ffb4"/>
<rect x="1034" y="138" width="1" height="38" fill="#50c850"/>
<rect x="1033" y="155" width="3" height="17" fill="#46e646"/>
<rect x="1034" y="156" width="1" height="15" fill="#b4ffb4"/>
<rect x="1038" y="151" width="1" height="80" fill="#50c850"/>
<rect x="1037" y="169" width="3" height="60" fill="#46e646"/>
<rect x="1038" y="170" width="1" height="58" fill="#b4ffb4"/>
<rect x="1042" y="180" width="1" height="174" fill="#50c850"/>
<rect x="1041" y="188" width="3" height="166" fill="#46e646"/>
<rect x="1042" y="189" width="1" height="164" fill="#000"/>
<rect x="1046" y="175" width="1" height="33" fill="#50c850"/>
<rect x="1045" y="191" width="3" height="7" fill="#46e646"/>
<rect x="1046" y="192" width="1" height="5" fill="#b4ffb4"/>
<rect x="1050" y="128" width="1" height="51" fill="#50c850"/>
<rect x="1049" y="133" width="3" height="45" fill="#46e646"/>
<rect x="1050" y="134" width="1" height="43" fill="#000"/>
<rect x="1054" y="134" width="1" height="3" fill="#50c850"/>
<rect x="1053" y="134" width="3" height="3" fill="#46e646"/>
<rect x="1054" y="135" width="1" height="1" fill="#b4ffb4"/>
<rect x="1058" y="124" width="1" height="17" fill="#50c850"/>
<rect x="1057" y="130" width="3" height="5" fill="#46e646"/>
<rect x="1058" y="131" width="1" height="3" fill="#000"/>
<rect x="1062" y="125" width="1" height="17" fill="#50c850"/>
<rect x="1061" y="132" width="3" height="4" fill="#46e646"/>
<rect x="1062" y="133" width="1" height="2" fill="#b4ffb4"/>
<rect x="1066" y="134" width="1" height="11" fill="#50c850"/>
<rect x="1065" y="138" width="3" height="3" fill="#46e646"/>
<rect x="1066" y="139" width="1" height="1" fill="#b4ffb4"/>
<rect x="1070" y="139" width="1" height="46" fill="#50c850"/>
<rect x="1069" y="140" width="3" height="37" fill="#46e646"/>
<rect x="1070" y="141" width="1" height="35" fill="#b4ffb4"/>
<rect x="1074" y="154" width="1" height="25" fill="#50c850"/>
<rect x="1073" y="164" width="3" height="12" fill="#46e646"/>
<rect x="1074" y="165" width="1" height="10" fill="#000"/>
<rect x="1078" y="137" width="1" height="26" fill="#50c850"/>
<rect x="1077" y="150" width="3" height="6" fill="#46e646"/>
<rect x="1078" y="151" width="1" height="4" fill="#000"/>
<rect x="1082" y="118" width="1" height="28" fill="#50c850"/>
<rect x="1081" y="130" width="3" height="9" fill="#46e646"/>
<rect x="1082" y="131" width="1" height="7" fill="#000"/>
<rect x="1086" y="119" width="1" height="30" fill="#50c850"/>
<rect x="1085" y="130" width="3" height="3" fill="#46e646"/>
<rect x="1086" y="131" width="1" height="1" fill="#b4ffb4"/>
<rect x="1090" y="131" width="1" height="12" fill="#50c850"/>
<rect x="1089" y="135" width="3" height="4" fill="#46e646"/>
<rect x="1090" y="136" width="1" height="2" fill="#b4ffb4"/>
<rect x="1094" y="112" width="1" height="35" fill="#50c850"/>
<rect x="1093" y="122" width="3" height="21" fill="#46e646"/>
<rect x="1094" y="123" width="1" height="19" fill="#000"/>
<rect x="1098" y="122" width="1" height="18" fill="#50c850"/>
<rect x="1097" y="124" width="3" height="12" fill="#46e646"/>
<rect x="1098" y="125" width="1" height="10" fill="#b4ffb4"/>
<rect x="1102" y="129" width="1" height="18" fill="#50c850"/>
<rect x="1101" y="136" width="3" height="9" fill="#46e646"/>
<rect x="1102" y="137" width="1" height="7" fill="#b4ffb4"/>
<rect x="1106" y="131" width="1" height="25" fill="#50c850"/>
<rect x="1105" y="142" width="3" height="8" fill="#46e646"/>
<rect x="1106" y="143" width="1" height="6" fill="#b4ffb4"/>
<rect x="1110" y="141" width="1" height="19" fill="#50c850"/>
<rect x="1109" y="148" width="3" height="10" fill="#46e646"/>
<rect x="1110" y="149" width="1" height="8" fill="#b4ffb4"/>
<rect x="1114" y="155" width="1" height="11" fill="#50c850"/>
<rect x="1113" y="158" width="3" height="5" fill="#46e646"/>
<rect x="1114" y="159" width="1" height="3" fill="#b4ffb4"/>
<rect x="1118" y="166" width="1" height="60" fill="#50c850"/>
<rect x="1117" y="169" width="3" height="32" fill="#46e646"/>
<rect x="1118" y="170" width="1" height="30" fill="#b4ffb4"/>
<rect x="1122" y="195" width="1" height="31" fill="#50c850"/>
<rect x="1121" y="203" width="3" height="6" fill="#46e646"/>
<rect x="1122" y="204" width="1" height="4" fill="#b4ffb4"/>
<rect x="1126" y="192" width="1" height="29" fill="#50c850"/>
<rect x="1125" y="194" width="3" height="14" fill="#46e646"/>
<rect x="1126" y="195" width="1" height="12" fill="#000"/>
<rect x="1130" y="152" width="1" height="46" fill="#50c850"/>
<rect x="1129" y="154" width="3" height="42" fill="#46e646"/>
<rect x="1130" y="155" width="1" height="40" fill="#000"/>
<rect x="1134" y="141" width="1" height="64" fill="#50c850"/>
<rect x="1133" y="152" width="3" height="24" fill="#46e646"/>
<rect x="1134" y="153" width="1" height="22" fill="#b4ffb4"/>
<rect x="1138" y="157" width="1" height="33" fill="#50c850"/>
<rect x="1137" y="160" width="3" height="16" fill="#46e646"/>
<rect x="1138" y="161" width="1" height="14" fill="#000"/>
<rect x="1142" y="129" width="1" height="48" fill="#50c850"/>
<rect x="1141" y="139" width="3" height="18" fill="#46e646"/>
<rect x="1142" y="140" width="1" height="16" fill="#000"/>
<rect x="1146" y="138" width="1" height="48" fill="#50c850"/>
<rect x="1145" y="141" width="3" height="21" fill="#46e646"/>
<rect x="1146" y="142" width="1" height="19" fill="#b4ffb4"/>
<rect x="1150" y="154" width="1" height="46" fill="#50c850"/>
<rect x="1149" y="162" width="3" height="35" fill="#46e646"/>
<rect x="1150" y="163" width="1" height="33" fill="#b4ffb4"/>
<rect x="1154" y="188" width="1" height="45" fill="#50c850"/>
<rect x="1153" y="194" width="3" height="26" fill="#46e646"/>
<rect x="1154" y="195" width="1" height="24" fill="#b4ffb4"/>
<rect x="1158" y="215" width="1" height="51" fill="#50c850"/>
<rect x="1157" y="220" width="3" height="38" fill="#46e646"/>
<rect x="1158" y="221" width="1" height="36" fill="#b4ffb4"/>
<rect x="1162" y="254" width="1" height="89" fill="#50c850"/>
<rect x="1161" y="255" width="3" height="47" fill="#46e646"/>
<rect x="1162" y="256" width="1" height="45" fill="#b4ffb4"/>
<rect x="1166" y="206" width="1" height="167" fill="#50c850"/>
<rect x="1165" y="262" width="3" height="61" fill="#46e646"/>
<rect x="1166" y="263" width="1" height="59" fill="#000"/>
<rect x="1170" y="250" width="1" height="51" fill="#50c850"/>
<rect x="1169" y="262" width="3" height="23" fill="#46e646"/>
<rect x="1170" y="263" width="1" height="21" fill="#b4ffb4"/>
<rect x="1174" y="275" width="1" height="98" fill="#50c850"/>
<rect x="1173" y="284" width="3" height="47" fill="#46e646"/>
<rect x="1174" y="285" width="1" height="45" fill="#b4ffb4"/>
<rect x="1178" y="300" width="1" height="73" fill="#50c850"/>
<rect x="1177" y="326" width="3" height="6" fill="#46e646"/>
<rect x="1178" y="327" width="1" height="4" fill="#000"/>
<rect x="1182" y="260" width="1" height="83" fill="#50c850"/>
<rect x="1181" y="276" width="3" height="49" fill="#46e646"/>
<rect x="1182" y="277" width="1" height="47" fill="#000"/>
<rect x="1186" y="274" width="1" height="69" fill="#50c850"/>
<rect x="1185" y="275" width="3" height="27" fill="#46e646"/>
<rect x="1186" y="276" width="1" height="25" fill="#b4ffb4"/>
<rect x="1190" y="277" width="1" height="31" fill="#50c850"/>
<rect x="1189" y="301" width="3" height="3" fill="#46e646"/>
<rect x="1190" y="302" width="1" height="1" fill="#b4ffb4"/>
<rect x="1194" y="267" width="1" height="54" fill="#50c850"/>
<rect x="1193" y="282" width="3" height="23" fill="#46e646"/>
<rect x="1194" y="283" width="1" height="21" fill="#000"/>
<rect x="1198" y="261" width="1" height="76" fill="#50c850"/>
<rect x="1197" y="282" width="3" height="53" fill="#46e646"/>
<rect x="1198" y="283" width="1" height="51" fill="#b4ffb4"/>
<rect x="1202" y="300" width="1" height="56" fill="#50c850"/>
<rect x="1201" y="309" width="3" height="27" fill="#46e646"/>
<rect x="1202" y="310" width="1" height="25" fill="#000"/>
<rect x="1206" y="279" width="1" height="56" fill="#50c850"/>
<rect x="1205" y="311" width="3" height="20" fill="#46e646"/>
<rect x="1206" y="312" width="1" height="18" fill="#b4ffb4"/>
<rect x="1210" y="330" width="1" height="18" fill="#50c850"/>
<rect x="1209" y="332" width="3" height="9" fill="#46e646"/>
<rect x="1210" y="333" width="1" height="7" fill="#000"/>
<rect x="1214" y="322" width="1" height="39" fill="#50c850"/>
<rect x="1213" y="334" width="3" height="21" fill="#46e646"/>
<rect x="1214" y="335" width="1" height="19" fill="#000"/>
<rect x="1218" y="312" width="1" height="31" fill="#50c850"/>
<rect x="1217" y="334" width="3" height="4" fill="#46e646"/>
<rect x="1218" y="335" width="1" height="2" fill="#b4ffb4"/>
<rect x="1222" y="336" width="1" height="26" fill="#50c850"/>
<rect x="1221" y="340" width="3" height="11" fill="#46e646"/>
<rect x="1222" y="341" width="1" height="9" fill="#b4ffb4"/>
<rect x="1226" y="345" width="1" height="36" fill="#50c850"/>
<rect x="1225" y="349" width="3" height="28" fill="#46e646"/>
<rect x="1226" y="350" width="1" height="26" fill="#000"/>
<rect x="1230" y="342" width="1" height="71" fill="#50c850"/>
<rect x="1229" y="348" width="3" height="62" fill="#46e646"/>
<rect x="1230" y="349" width="1" height="60" fill="#b4ffb4"/>
<rect x="1234" y="411" width="1" height="97" fill="#50c850"/>
<rect x="1233" y="411" width="3" height="70" fill="#46e646"/>
<rect x="1234" y="412" width="1" height="68" fill="#000"/>
<rect x="1238" y="370" width="1" height="77" fill="#50c850"/>
<rect x="1237" y="371" width="3" height="41" fill="#46e646"/>
<rect x="1238" y="372" width="1" height="39" fill="#000"/>
<rect x="1242" y="329" width="1" height="50" fill="#50c850"/>
<rect x="1241" y="336" width="3" height="31" fill="#46e646"/>
<rect x="1242" y="337" width="1" height="29" fill="#000"/>
<rect x="1246" y="328" width="1" height="11" fill="#50c850"/>
<rect x="1245" y="331" width="3" height="4" fill="#46e646"/>
<rect x="1246" y="332" width="1" height="2" fill="#b4ffb4"/>
<rect x="1250" y="308" width="1" height="23" fill="#50c850"/>
<rect x="1249" y="318" width="3" height="8" fill="#46e646"/>
<rect x="1250" y="319" width="1" height="6" fill="#b4ffb4"/>
<rect x="1254" y="315" width="1" height="18" fill="#50c850"/>
<rect x="1253" y="320" width="3" height="3" fill="#46e646"/>
<rect x="1254" y="321" width="1" height="1" fill="#b4ffb4"/>
<rect x="1258" y="325" width="1" height="12" fill="#50c850"/>
<rect x="1257" y="328" width="3" height="5" fill="#46e646"/>
<rect x="1258" y="329" width="1" height="3" fill="#b4ffb4"/>
<rect x="1262" y="329" width="1" height="29" fill="#50c850"/>
<rect x="1261" y="337" width="3" height="9" fill="#46e646"/>
<rect x="1262" y="338" width="1" height="7" fill="#b4ffb4"/>
<rect x="1266" y="319" width="1" height="37" fill="#50c850"/>
<rect x="1265" y="322" width="3" height="23" fill="#46e646"/>
<rect x="1266" y="323" width="1" height="21" fill="#000"/>
<rect x="1270" y="320" width="1" height="26" fill="#50c850"/>
<rect x="1269" y="322" width="3" height="23" fill="#46e646"/>
<rect x="1270" y="323" width="1" height="21" fill="#000"/>
<rect x="1274" y="331" width="1" height="34" fill="#50c850"/>
<rect x="1273" y="342" width="3" height="21" fill="#46e646"/>
<rect x="1274" y="343" width="1" height="19" fill="#b4ffb4"/>
<rect x="1278" y="347" width="1" height="35" fill="#50c850"/>
<rect x="1277" y="356" width="3" height="9" fill="#46e646"/>
<rect x="1278" y="357" width="1" height="7" fill="#000"/>
<rect x="1282" y="325" width="1" height="32" fill="#50c850"/>
<rect x="1281" y="330" width="3" height="27" fill="#46e646"/>
<rect x="1282" y="331" width="1" height="25" fill="#000"/>
<rect x="1286" y="311" width="1" height="41" fill="#50c850"/>
<rect x="1285" y="330" width="3" height="21" fill="#46e646"/>
<rect x="1286" y="331" width="1" height="19" fill="#b4ffb4"/>
<rect x="1290" y="319" width="1" height="41" fill="#50c850"/>
<rect x="1289" y="349" width="3" height="9" fill="#46e646"/>
<rect x="1290" y="350" width="1" height="7" fill="#b4ffb4"/>
<rect x="1294" y="326" width="1" height="31" fill="#50c850"/>
<rect x="1293" y="334" width="3" height="22" fill="#46e646"/>
<rect x="1294" y="335" width="1" height="20" fill="#000"/>
<rect x="1298" y="311" width="1" height="30" fill="#50c850"/>
<rect x="1297" y="327" width="3" height="8" fill="#46e646"/>
<rect x="1298" y="328" width="1" height="6" fill="#000"/>
<rect x="1302" y="286" width="1" height="46" fill="#50c850"/>
<rect x="1301" y="297" width="3" height="33" fill="#46e646"/>
<rect x="1302" y="298" width="1" height="31" fill="#000"/>
<rect x="1306" y="298" width="1" height="33" fill="#50c850"/>
<rect x="1305" y="300" width="3" height="29" fill="#46e646"/>
<rect x="1306" y="301" width="1" height="27" fill="#b4ffb4"/>
<rect x="1310" y="275" width="1" height="62" fill="#50c850"/>
<rect x="1309" y="327" width="3" height="3" fill="#46e646"/>
<rect x="1310" y="328" width="1" height="1" fill="#b4ffb4"/>
<rect x="1314" y="321" width="1" height="75" fill="#50c850"/>
<rect x="1313" y="330" width="3" height="42" fill="#46e646"/>
<rect x="1314" y="331" width="1" height="40" fill="#b4ffb4"/>
<rect x="1318" y="352" width="1" height="46" fill="#50c850"/>
<rect x="1317" y="355" width="3" height="36" fill="#46e646"/>
<rect x="1318" y="356" width="1" height="34" fill="#000"/>
<rect x="1322" y="337" width="1" height="44" fill="#50c850"/>
<rect x="1321" y="351" width="3" height="25" fill="#46e646"/>
<rect x="1322" y="352" width="1" height="23" fill="#000"/>
<rect x="1326" y="375" width="1" height="46" fill="#50c850"/>
<rect x="1325" y="375" width="3" height="27" fill="#46e646"/>
<rect x="1326" y="376" width="1" height="25" fill="#b4ffb4"/>
<rect x="1330" y="409" width="1" height="42" fill="#50c850"/>
<rect x="1329" y="447" width="3" height="4" fill="#46e646"/>
<rect x="1330" y="448" width="1" height="2" fill="#b4ffb4"/>
<rect x="1334" y="439" width="1" height="42" fill="#50c850"/>
<rect x="1333" y="447" width="3" height="18" fill="#46e646"/>
<rect x="1334" y="448" width="1" height="16" fill="#b4ffb4"/>
<rect x="1338" y="410" width="1" height="71" fill="#50c850"/>
<rect x="1337" y="462" width="3" height="4" fill="#46e646"/>
<rect x="1338" y="463" width="1" height="2" fill="#b4ffb4"/>
<rect x="1342" y="467" width="1" height="8" fill="#50c850"/>
<rect x="1341" y="470" width="3" height="4" fill="#46e646"/>
<rect x="1342" y="471" width="1" height="2" fill="#b4ffb4"/>
<rect x="0" y="0" width="1388" height="1" fill="#696969"/>
<rect x="1" y="3" width="1352" height="1" fill="#fff"/>
<rect x="1" y="3" width="1" height="786" fill="#fff"/>
<rect x="1352" y="3" width="1" height="786" fill="#fff"/>
<rect x="1" y="788" width="1352" height="1" fill="#fff"/>
<rect x="1353" y="4" width="35" height="802" fill="#000"/>
<rect x="0" y="789" width="1388" height="17" fill="#000"/>
<rect x="1353" y="5" width="3" height="1" fill="#fff"/>
<rect x="1353" y="42" width="3" height="1" fill="#fff"/>
<rect x="1353" y="79" width="3" height="1" fill="#fff"/>
<rect x="1353" y="116" width="3" height="1" fill="#fff"/>
<rect x="1353" y="153" width="3" height="1" fill="#fff"/>
<rect x="1353" y="190" width="3" height="1" fill="#fff"/>
<rect x="1353" y="227" width="3" height="1" fill="#fff"/>
<rect x="1353" y="264" width="3" height="1" fill="#fff"/>
<rect x="1353" y="301" width="3" height="1" fill="#fff"/>
<rect x="1353" y="338" width="3" height="1" fill="#fff"/>
<rect x="1353" y="375" width="3" height="1" fill="#fff"/>
<rect x="1353" y="412" width="3" height="1" fill="#fff"/>
<rect x="1353" y="449" width="3" height="1" fill="#fff"/>
<rect x="1353" y="486" width="3" height="1" fill="#fff"/>
<rect x="1353" y="523" width="3" height="1" fill="#fff"/>
<rect x="1353" y="560" width="3" height="1" fill="#fff"/>
<rect x="1353" y="597" width="3" height="1" fill="#fff"/>
<rect x="1353" y="634" width="3" height="1" fill="#fff"/>
<rect x="1353" y="671" width="3" height="1" fill="#fff"/>
<rect x="1353" y="708" width="3" height="1" fill="#fff"/>
<rect x="1353" y="745" width="3" height="1" fill="#fff"/>
<rect x="1353" y="782" width="3" height="1" fill="#fff"/>
<rect x="2" y="789" width="1" height="3" fill="#fff"/>
<rect x="66" y="789" width="1" height="3" fill="#fff"/>
<rect x="130" y="789" width="1" height="3" fill="#fff"/>
<rect x="194" y="789" width="1" height="3" fill="#fff"/>
<rect x="258" y="789" width="1" height="3" fill="#fff"/>
<rect x="322" y="789" width="1" height="3" fill="#fff"/>
<rect x="386" y="789" width="1" height="3" fill="#fff"/>
<rect x="450" y="789" width="1" height="3" fill="#fff"/>
<rect x="514" y="789" width="1" height="3" fill="#fff"/>
<rect x="578" y="789" width="1" height="3" fill="#fff"/>
<rect x="642" y="789" width="1" height="3" fill="#fff"/>
<rect x="706" y="789" width="1" height="3" fill="#fff"/>
<rect x="770" y="789" width="1" height="3" fill="#fff"/>
<rect x="834" y="789" width="1" height="3" fill="#fff"/>
<rect x="898" y="789" width="1" height="3" fill="#fff"/>
<rect x="962" y="789" width="1" height="3" fill="#fff"/>
<rect x="1026" y="789" width="1" height="3" fill="#fff"/>
<rect x="1090" y="789" width="1" height="3" fill="#fff"/>
<rect x="1154" y="789" width="1" height="3" fill="#fff"/>
<rect x="1218" y="789" width="1" height="3" fill="#fff"/>
<rect x="1282" y="789" width="1" height="3" fill="#fff"/>
<polygon points="5,10 12,10 8.5,14" fill="#fff" shape-rendering="geometricPrecision"/>
</svg>
<div class="t" style="left:17px;top:7px;font-size:9.45px">EURCHF,M30</div>
<div class="pl" style="top:0.40000000000000036px">0.93600</div>
<div class="pl" style="top:37.4px">0.93565</div>
<div class="pl" style="top:74.4px">0.93530</div>
<div class="pl" style="top:111.4px">0.93495</div>
<div class="pl" style="top:148.4px">0.93460</div>
<div class="pl" style="top:185.4px">0.93425</div>
<div class="pl" style="top:222.4px">0.93390</div>
<div class="pl" style="top:259.4px">0.93355</div>
<div class="pl" style="top:296.4px">0.93320</div>
<div class="pl" style="top:333.4px">0.93285</div>
<div class="pl" style="top:370.4px">0.93250</div>
<div class="pl" style="top:407.4px">0.93215</div>
<div class="pl" style="top:444.4px">0.93180</div>
<div class="pl" style="top:481.4px">0.93145</div>
<div class="pl" style="top:518.4px">0.93110</div>
<div class="pl" style="top:555.4px">0.93075</div>
<div class="pl" style="top:592.4px">0.93040</div>
<div class="pl" style="top:629.4px">0.93005</div>
<div class="pl" style="top:666.4px">0.92970</div>
<div class="pl" style="top:703.4px">0.92935</div>
<div class="pl" style="top:740.4px">0.92900</div>
<div class="pl" style="top:777.4px">0.92865</div>
<div style="position:absolute;left:1354px;top:468px;width:34px;height:11px;background:#fff"></div>
<div class="pl" style="top:468px;color:#000">0.93157</div>
<div class="t" style="left:1px;top:793px">8 Sep 2025</div>
<div class="t" style="left:65px;top:793px">8 Sep 22:00</div>
<div class="t" style="left:129px;top:793px">9 Sep 06:00</div>
<div class="t" style="left:193px;top:793px">9 Sep 14:00</div>
<div class="t" style="left:257px;top:793px">9 Sep 22:00</div>
<div class="t" style="left:321px;top:793px">10 Sep 06:00</div>
<div class="t" style="left:385px;top:793px">10 Sep 14:00</div>
<div class="t" style="left:449px;top:793px">10 Sep 22:00</div>
<div class="t" style="left:513px;top:793px">11 Sep 06:00</div>
<div class="t" style="left:577px;top:793px">11 Sep 14:00</div>
<div class="t" style="left:641px;top:793px">11 Sep 22:00</div>
<div class="t" style="left:705px;top:793px">12 Sep 06:00</div>
<div class="t" style="left:769px;top:793px">12 Sep 14:00</div>
<div class="t" style="left:833px;top:793px">12 Sep 22:00</div>
<div class="t" style="left:897px;top:793px">15 Sep 06:00</div>
<div class="t" style="left:961px;top:793px">15 Sep 14:00</div>
<div class="t" style="left:1025px;top:793px">15 Sep 22:00</div>
<div class="t" style="left:1089px;top:793px">16 Sep 06:00</div>
<div class="t" style="left:1153px;top:793px">16 Sep 14:00</div>
<div class="t" style="left:1217px;top:793px">16 Sep 22:00</div>
<div class="t" style="left:1281px;top:793px">17 Sep 06:00</div>
<svg width="0" height="0" style="position:absolute"><defs><linearGradient id="og" x1="0" x2="1" y1="0" y2="0"><stop offset="0" stop-color="#ff8a00"/><stop offset=".55" stop-color="#ffe818"/><stop offset="1" stop-color="#ffb400"/></linearGradient><linearGradient id="bg" x1="0" x2="0" y1="0" y2="1"><stop offset="0" stop-color="#b2d6f6"/><stop offset="1" stop-color="#86b8e6"/></linearGradient><linearGradient id="gg" x1="0" x2="0" y1="0" y2="1"><stop offset="0" stop-color="#a4f0a4"/><stop offset="1" stop-color="#6ad878"/></linearGradient></defs></svg>
<div id="dlg"><div class="title"><div class="ttxt">Custom Indicator - xo-indicator</div>
<svg width="603" height="29" style="position:absolute;left:0;top:0"><path d="M575.5 9.5L585.5 19.5M585.5 9.5L575.5 19.5" stroke="#000" stroke-width="1" fill="none"/></svg>
<div style="position:absolute;left:532px;top:7px;font-size:12.5px;line-height:14px;color:#000">?</div></div>
<div class="tab" style="left:8px;top:39px;width:52px;height:20px;padding-top:3px"><span class="sc">Common</span></div>
<div class="tab" style="left:104px;top:39px;width:41px;height:20px;padding-top:3px;border-left:none;padding-right:1px"><span class="sc">Colors</span></div>
<div class="tab" style="left:144px;top:39px;width:69px;height:20px;padding-top:3px"><span class="sc">Visualization</span></div>
<div id="pane"></div>
<div class="tab" style="left:59px;top:37px;width:46px;height:22px;padding-top:3px;background:#fff;border-bottom:none"><span class="sc">Inputs</span></div>
<div id="list">
<div style="position:absolute;left:0;top:0;width:566px;height:25px;background:#fff;border-bottom:1px solid #e5e5e5;font-size:11.4px;line-height:27px;color:#000"><span class="sx" style="position:absolute;left:6px">Variable</span><span class="sx" style="position:absolute;left:289px">Value</span><div style="position:absolute;left:282px;top:0;width:1px;height:24px;background:#e5e5e5"></div><div style="position:absolute;left:565px;top:0;width:1px;height:24px;background:#e5e5e5"></div></div>
<div class="row g" style="top:25px"><svg width="16" height="16" viewBox="0 0 16 16"><path d="M.5 .5H11.5L15.5 4.5V14.4L13.5 15.4 11.7 12.9 10.1 13.9 8.6 12.9 7.1 13.9 5.6 12.9 4.1 13.9 2.6 14.8H.5Z" fill="#fff" stroke="#6a6a6a"/><path d="M11.5 .5V4.5H15.5Z" fill="#f4f4f4" stroke="#6a6a6a" stroke-linejoin="round"/><rect x="2" y="5.6" width="11" height="5.2" fill="#f5a800"/><rect x="2.5" y="6.1" width="10" height="4.2" fill="url(#og)"/></svg><span class="n sx">up_color</span><div class="sep"></div><div class="sw" style="background:#4169E1"></div><span class="vs sx">RoyalBlue</span></div>
<div class="row" style="top:45px"><svg width="16" height="16" viewBox="0 0 16 16"><path d="M.5 .5H11.5L15.5 4.5V14.4L13.5 15.4 11.7 12.9 10.1 13.9 8.6 12.9 7.1 13.9 5.6 12.9 4.1 13.9 2.6 14.8H.5Z" fill="#fff" stroke="#6a6a6a"/><path d="M11.5 .5V4.5H15.5Z" fill="#f4f4f4" stroke="#6a6a6a" stroke-linejoin="round"/><rect x="2" y="5.6" width="11" height="5.2" fill="#f5a800"/><rect x="2.5" y="6.1" width="10" height="4.2" fill="url(#og)"/></svg><span class="n sx">down_color</span><div class="sep"></div><div class="sw" style="background:#DC143C"></div><span class="vs sx">Crimson</span></div>
<div class="row g" style="top:65px"><svg width="16" height="16" viewBox="0 0 16 16"><path d="M.5 .5H11.5L15.5 4.5V14.4L13.5 15.4 11.7 12.9 10.1 13.9 8.6 12.9 7.1 13.9 5.6 12.9 4.1 13.9 2.6 14.8H.5Z" fill="#fff" stroke="#6a6a6a"/><path d="M11.5 .5V4.5H15.5Z" fill="#f4f4f4" stroke="#6a6a6a" stroke-linejoin="round"/><rect x="2" y="5.6" width="11" height="5.2" fill="#f5a800"/><rect x="2.5" y="6.1" width="10" height="4.2" fill="url(#og)"/></svg><span class="n sx">border_color</span><div class="sep"></div><div class="sw" style="background:#000"></div><span class="vs sx">Black</span></div>
<div class="row" style="top:85px"><svg width="16" height="16" viewBox="0 0 16 16"><path d="M.5 .5H11.5L15.5 4.5V14.4L13.5 15.4 11.7 12.9 10.1 13.9 8.6 12.9 7.1 13.9 5.6 12.9 4.1 13.9 2.6 14.8H.5Z" fill="url(#bg)" stroke="#5e9bd6"/><path d="M11.5 .5V4.5H15.5Z" fill="#cfe6fa" stroke="#5e9bd6" stroke-linejoin="round"/><text x="1.6" y="11.2" font-family="Liberation Sans" font-weight="bold" font-size="7.6" fill="#0a2f5c" stroke="#0a2f5c" stroke-width=".4" textLength="10.6" lengthAdjust="spacingAndGlyphs">123</text></svg><span class="n sx">border_width</span><div class="sep"></div><span class="v sx">1</span></div>
<div class="row g" style="top:105px"><svg width="16" height="16" viewBox="0 0 16 16"><path d="M.5 .5H11.5L15.5 4.5V14.4L13.5 15.4 11.7 12.9 10.1 13.9 8.6 12.9 7.1 13.9 5.6 12.9 4.1 13.9 2.6 14.8H.5Z" fill="url(#bg)" stroke="#5e9bd6"/><path d="M11.5 .5V4.5H15.5Z" fill="#cfe6fa" stroke="#5e9bd6" stroke-linejoin="round"/><text x="1.6" y="11.2" font-family="Liberation Sans" font-weight="bold" font-size="7.6" fill="#0a2f5c" stroke="#0a2f5c" stroke-width=".4" textLength="10.6" lengthAdjust="spacingAndGlyphs">123</text></svg><span class="n sx">size</span><div class="sep"></div><span class="v sx">50</span></div>
<div class="row" style="top:125px"><svg width="16" height="16" viewBox="0 0 16 16"><path d="M.5 .5H11.5L15.5 4.5V14.4L13.5 15.4 11.7 12.9 10.1 13.9 8.6 12.9 7.1 13.9 5.6 12.9 4.1 13.9 2.6 14.8H.5Z" fill="url(#bg)" stroke="#5e9bd6"/><path d="M11.5 .5V4.5H15.5Z" fill="#cfe6fa" stroke="#5e9bd6" stroke-linejoin="round"/><text x="1.6" y="11.2" font-family="Liberation Sans" font-weight="bold" font-size="7.6" fill="#0a2f5c" stroke="#0a2f5c" stroke-width=".4" textLength="10.6" lengthAdjust="spacingAndGlyphs">123</text></svg><span class="n sx">reverse</span><div class="sep"></div><span class="v sx">3</span></div>
<div class="row g" style="top:145px"><svg width="16" height="16" viewBox="0 0 16 16"><path d="M.5 .5H11.5L15.5 4.5V14.4L13.5 15.4 11.7 12.9 10.1 13.9 8.6 12.9 7.1 13.9 5.6 12.9 4.1 13.9 2.6 14.8H.5Z" fill="url(#bg)" stroke="#5e9bd6"/><path d="M11.5 .5V4.5H15.5Z" fill="#cfe6fa" stroke="#5e9bd6" stroke-linejoin="round"/><text x="1.6" y="11.2" font-family="Liberation Sans" font-weight="bold" font-size="7.6" fill="#0a2f5c" stroke="#0a2f5c" stroke-width=".4" textLength="10.6" lengthAdjust="spacingAndGlyphs">123</text></svg><span class="n sx">width</span><div class="sep"></div><span class="v sx">3</span></div>
<div class="row" style="top:165px"><svg width="16" height="16" viewBox="0 0 16 16"><path d="M.5 .5H11.5L15.5 4.5V14.4L13.5 15.4 11.7 12.9 10.1 13.9 8.6 12.9 7.1 13.9 5.6 12.9 4.1 13.9 2.6 14.8H.5Z" fill="url(#bg)" stroke="#5e9bd6"/><path d="M11.5 .5V4.5H15.5Z" fill="#cfe6fa" stroke="#5e9bd6" stroke-linejoin="round"/><text x="1.6" y="11.2" font-family="Liberation Sans" font-weight="bold" font-size="7.6" fill="#0a2f5c" stroke="#0a2f5c" stroke-width=".4" textLength="10.6" lengthAdjust="spacingAndGlyphs">123</text></svg><span class="n sx">bars</span><div class="sep"></div><span class="v sx">1000</span></div>
<div class="row g" style="top:185px"><svg width="16" height="16" viewBox="0 0 16 16"><path d="M.5 .5H11.5L15.5 4.5V14.4L13.5 15.4 11.7 12.9 10.1 13.9 8.6 12.9 7.1 13.9 5.6 12.9 4.1 13.9 2.6 14.8H.5Z" fill="url(#gg)" stroke="#3fbf4f"/><path d="M11.5 .5V4.5H15.5Z" fill="#c8f7c8" stroke="#3fbf4f" stroke-linejoin="round"/><path d="M2.4 9.8L7.2 5.6M8.6 8.6H13" fill="none" stroke="#0a6a1a" stroke-width="1.5"/></svg><span class="n sx">separate_years</span><div class="sep"></div><span class="v sx">true</span></div>
<div class="row" style="top:205px"><svg width="16" height="16" viewBox="0 0 16 16"><path d="M.5 .5H11.5L15.5 4.5V14.4L13.5 15.4 11.7 12.9 10.1 13.9 8.6 12.9 7.1 13.9 5.6 12.9 4.1 13.9 2.6 14.8H.5Z" fill="#fff" stroke="#6a6a6a"/><path d="M11.5 .5V4.5H15.5Z" fill="#f4f4f4" stroke="#6a6a6a" stroke-linejoin="round"/><rect x="2" y="5.6" width="11" height="5.2" fill="#f5a800"/><rect x="2.5" y="6.1" width="10" height="4.2" fill="url(#og)"/></svg><span class="n sx">separator_color</span><div class="sep"></div><div class="sw" style="background:#000"></div><span class="vs sx">Black</span></div>
<div class="row g" style="top:225px"><svg width="16" height="16" viewBox="0 0 16 16"><path d="M.5 .5H11.5L15.5 4.5V14.4L13.5 15.4 11.7 12.9 10.1 13.9 8.6 12.9 7.1 13.9 5.6 12.9 4.1 13.9 2.6 14.8H.5Z" fill="url(#bg)" stroke="#5e9bd6"/><path d="M11.5 .5V4.5H15.5Z" fill="#cfe6fa" stroke="#5e9bd6" stroke-linejoin="round"/><text x="1.6" y="11.2" font-family="Liberation Sans" font-weight="bold" font-size="7.6" fill="#0a2f5c" stroke="#0a2f5c" stroke-width=".4" textLength="10.6" lengthAdjust="spacingAndGlyphs">123</text></svg><span class="n sx">separator_style</span><div class="sep"></div><span class="v sx">2</span></div>
<div class="row" style="top:245px"><svg width="16" height="16" viewBox="0 0 16 16"><path d="M.5 .5H11.5L15.5 4.5V14.4L13.5 15.4 11.7 12.9 10.1 13.9 8.6 12.9 7.1 13.9 5.6 12.9 4.1 13.9 2.6 14.8H.5Z" fill="url(#gg)" stroke="#3fbf4f"/><path d="M11.5 .5V4.5H15.5Z" fill="#c8f7c8" stroke="#3fbf4f" stroke-linejoin="round"/><path d="M2.4 9.8L7.2 5.6M8.6 8.6H13" fill="none" stroke="#0a6a1a" stroke-width="1.5"/></svg><span class="n sx">mark_months</span><div class="sep"></div><span class="v sx">true</span></div>
<div class="row g" style="top:265px"><svg width="16" height="16" viewBox="0 0 16 16"><path d="M.5 .5H11.5L15.5 4.5V14.4L13.5 15.4 11.7 12.9 10.1 13.9 8.6 12.9 7.1 13.9 5.6 12.9 4.1 13.9 2.6 14.8H.5Z" fill="#fff" stroke="#6a6a6a"/><path d="M11.5 .5V4.5H15.5Z" fill="#f4f4f4" stroke="#6a6a6a" stroke-linejoin="round"/><rect x="2" y="5.6" width="11" height="5.2" fill="#f5a800"/><rect x="2.5" y="6.1" width="10" height="4.2" fill="url(#og)"/></svg><span class="n sx">winter_color</span><div class="sep"></div><div class="sw" style="background:#E0FFFF"></div><span class="vs sx">LightCyan</span></div>
<div class="row" style="top:285px"><svg width="16" height="16" viewBox="0 0 16 16"><path d="M.5 .5H11.5L15.5 4.5V14.4L13.5 15.4 11.7 12.9 10.1 13.9 8.6 12.9 7.1 13.9 5.6 12.9 4.1 13.9 2.6 14.8H.5Z" fill="#fff" stroke="#6a6a6a"/><path d="M11.5 .5V4.5H15.5Z" fill="#f4f4f4" stroke="#6a6a6a" stroke-linejoin="round"/><rect x="2" y="5.6" width="11" height="5.2" fill="#f5a800"/><rect x="2.5" y="6.1" width="10" height="4.2" fill="url(#og)"/></svg><span class="n sx">spring_color</span><div class="sep"></div><div class="sw" style="background:#32CD32"></div><span class="vs sx">LimeGreen</span></div>
<div class="row g" style="top:305px"><svg width="16" height="16" viewBox="0 0 16 16"><path d="M.5 .5H11.5L15.5 4.5V14.4L13.5 15.4 11.7 12.9 10.1 13.9 8.6 12.9 7.1 13.9 5.6 12.9 4.1 13.9 2.6 14.8H.5Z" fill="#fff" stroke="#6a6a6a"/><path d="M11.5 .5V4.5H15.5Z" fill="#f4f4f4" stroke="#6a6a6a" stroke-linejoin="round"/><rect x="2" y="5.6" width="11" height="5.2" fill="#f5a800"/><rect x="2.5" y="6.1" width="10" height="4.2" fill="url(#og)"/></svg><span class="n sx">summer_color</span><div class="sep"></div><div class="sw" style="background:#FFFF00"></div><span class="vs sx">Yellow</span></div>
<div class="row" style="top:325px"><svg width="16" height="16" viewBox="0 0 16 16"><path d="M.5 .5H11.5L15.5 4.5V14.4L13.5 15.4 11.7 12.9 10.1 13.9 8.6 12.9 7.1 13.9 5.6 12.9 4.1 13.9 2.6 14.8H.5Z" fill="#fff" stroke="#6a6a6a"/><path d="M11.5 .5V4.5H15.5Z" fill="#f4f4f4" stroke="#6a6a6a" stroke-linejoin="round"/><rect x="2" y="5.6" width="11" height="5.2" fill="#f5a800"/><rect x="2.5" y="6.1" width="10" height="4.2" fill="url(#og)"/></svg><span class="n sx">autumn_color</span><div class="sep"></div><div class="sw" style="background:#FFA500"></div><span class="vs sx">Orange</span></div>
</div>
<div class="btn" style="left:359px;border:2px solid #0078d7;line-height:17px"><span class="sc">OK</span></div>
<div class="btn" style="left:440px"><span class="sc">Cancel</span></div>
<div class="btn" style="left:521px"><span class="sc">Reset</span></div>
<svg width="8" height="8" style="position:absolute;left:594px;top:472px" shape-rendering="crispEdges"><g fill="#b8b8b8"><rect x="5" y="1" width="2" height="2"/><rect x="5" y="4" width="2" height="2"/><rect x="2" y="4" width="2" height="2"/><rect x="5" y="7" width="2" height="1"/></g></svg>
</div>
</body></html>
